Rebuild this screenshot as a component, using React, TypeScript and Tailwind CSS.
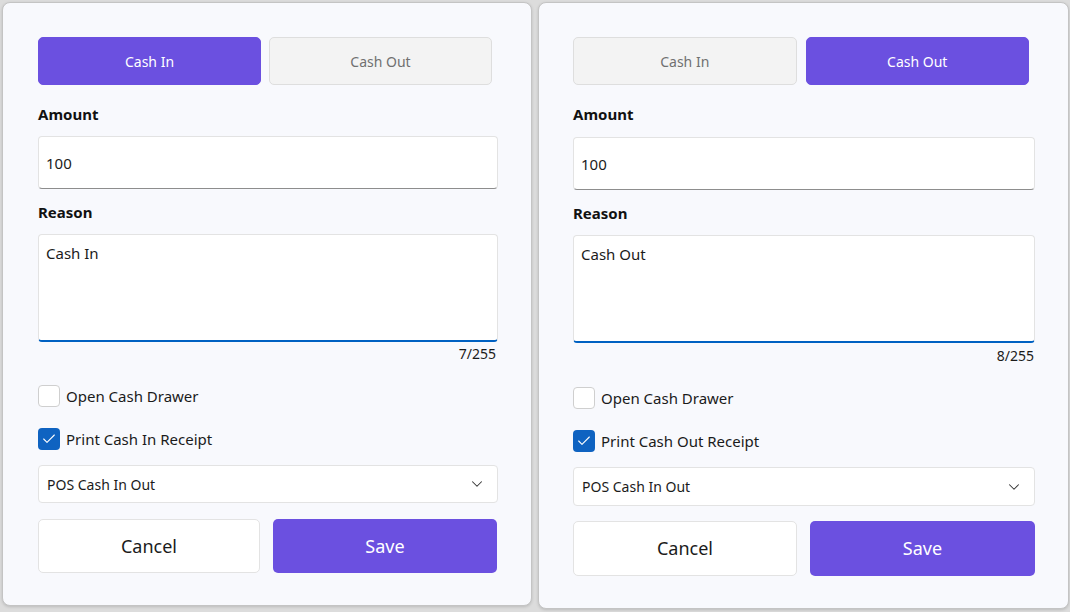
import React from 'react';
import { Check, ChevronDown } from 'lucide-react';

type Mode = 'in' | 'out';

function Toggle({ active, label }: { active: boolean; label: string }) {
  return (
    <button
      className={
        active
          ? 'h-[48px] rounded-[5px] border border-[#6b50e0] bg-[#6b50e0] text-[14px] text-white'
          : 'h-[48px] rounded-[5px] border border-[#dedede] bg-[#f3f3f3] text-[14px] text-[#707070]'
      }
    >
      {label}
    </button>
  );
}

function CheckRow({ checked, label }: { checked: boolean; label: string }) {
  return (
    <label className="flex items-center gap-[6px]">
      {checked ? (
        <span className="flex h-[22px] w-[22px] items-center justify-center rounded-[4px] bg-[#0f63c1]">
          <Check size={16} strokeWidth={1.6} className="text-white" />
        </span>
      ) : (
        <span className="h-[22px] w-[22px] rounded-[4px] border border-[#cfcfcf] bg-white" />
      )}
      <span className="text-[15px] text-[#1b1b1b]">{label}</span>
    </label>
  );
}

function CashDialog({ mode }: { mode: Mode }) {
  const word = mode === 'in' ? 'Cash In' : 'Cash Out';
  const out = mode === 'out';
  return (
    <div
      className={
        out
          ? 'flex h-full flex-col rounded-[8px] border border-[#c4c4c4] bg-[#f8f9fd] pl-[34px] pr-[33px] pt-[34px] shadow-[0_1px_3px_rgba(0,0,0,0.15)]'
          : 'flex h-full flex-col rounded-[8px] border border-[#c4c4c4] bg-[#f8f9fd] pl-[35px] pr-[33px] pt-[34px] shadow-[0_1px_3px_rgba(0,0,0,0.15)]'
      }
    >
      <div className={out ? 'grid w-[456px] grid-cols-2 gap-[9px]' : 'grid w-[454px] grid-cols-2 gap-[8px]'}>
        <Toggle active={mode === 'in'} label="Cash In" />
        <Toggle active={out} label="Cash Out" />
      </div>

      <div className="mt-[19px] text-[15px] font-bold leading-[20px] text-[#111]">Amount</div>
      <div
        className={
          out
            ? 'mt-[13px] flex h-[53px] items-center rounded-[4px] border border-[#e3e3e3] border-b-[#8d8d8d] bg-white px-[7px] pt-[2px] text-[15px] text-[#1b1b1b]'
            : 'mt-[12px] flex h-[53px] items-center rounded-[4px] border border-[#e3e3e3] border-b-[#8d8d8d] bg-white px-[7px] pt-[2px] text-[15px] text-[#1b1b1b]'
        }
      >
        100
      </div>

      <div className="mt-[13px] text-[15px] font-bold leading-[20px] text-[#111]">Reason</div>
      <div className="mt-[12px] h-[108px] rounded-[4px] border border-[#e3e3e3] border-b-2 border-b-[#0061c2] bg-white px-[7px] pt-[7px] text-[15px] text-[#1b1b1b]">
        {word}
      </div>
      <div
        className={
          out
            ? 'mt-[4px] pr-[1px] text-right text-[14px] leading-[18px] text-[#1b1b1b]'
            : 'mt-[3px] pr-[2px] text-right text-[14px] leading-[18px] text-[#1b1b1b]'
        }
      >
        {out ? '8/255' : '7/255'}
      </div>

      <div className="mt-[22px] flex flex-col gap-[20px]">
        <CheckRow checked={false} label="Open Cash Drawer" />
        <CheckRow checked label={`Print ${word} Receipt`} />
      </div>

      <div
        className={
          out
            ? 'mt-[15px] flex h-[39px] items-center justify-between rounded-[4px] border border-[#e3e3e3] bg-white pl-[8px] pr-[11px] text-[14px] text-[#1b1b1b]'
            : 'mt-[15px] flex h-[38px] items-center justify-between rounded-[4px] border border-[#e3e3e3] bg-white pl-[8px] pr-[11px] text-[14px] text-[#1b1b1b]'
        }
      >
        <span>POS Cash In Out</span>
        <ChevronDown size={18} strokeWidth={1.4} className="text-[#333]" />
      </div>

      <div className={out ? 'mt-[15px] grid grid-cols-[224px_225px] gap-[13px]' : 'mt-[16px] grid grid-cols-[222px_224px] gap-[13px]'}>
        <button
          className={
            out
              ? 'h-[55px] rounded-[5px] border border-[#e3e3e3] bg-white text-[18px] text-[#1b1b1b]'
              : 'h-[54px] rounded-[5px] border border-[#e3e3e3] bg-white text-[18px] text-[#1b1b1b]'
          }
        >
          Cancel
        </button>
        <button
          className={
            out
              ? 'h-[55px] rounded-[5px] bg-[#6b50e0] text-[18px] text-white'
              : 'h-[54px] rounded-[5px] bg-[#6b50e0] text-[18px] text-white'
          }
        >
          Save
        </button>
      </div>
    </div>
  );
}

export default function App() {
  return (
    <div className="flex h-[612px] w-[1070px] gap-[6px] overflow-hidden bg-[#dcdcdc] pl-[2px] pt-[2px] font-['Noto_Sans',sans-serif]">
      <div className="h-[604px] w-[530px]">
        <CashDialog mode="in" />
      </div>
      <div className="h-[607px] w-[531px]">
        <CashDialog mode="out" />
      </div>
    </div>
  );
}
